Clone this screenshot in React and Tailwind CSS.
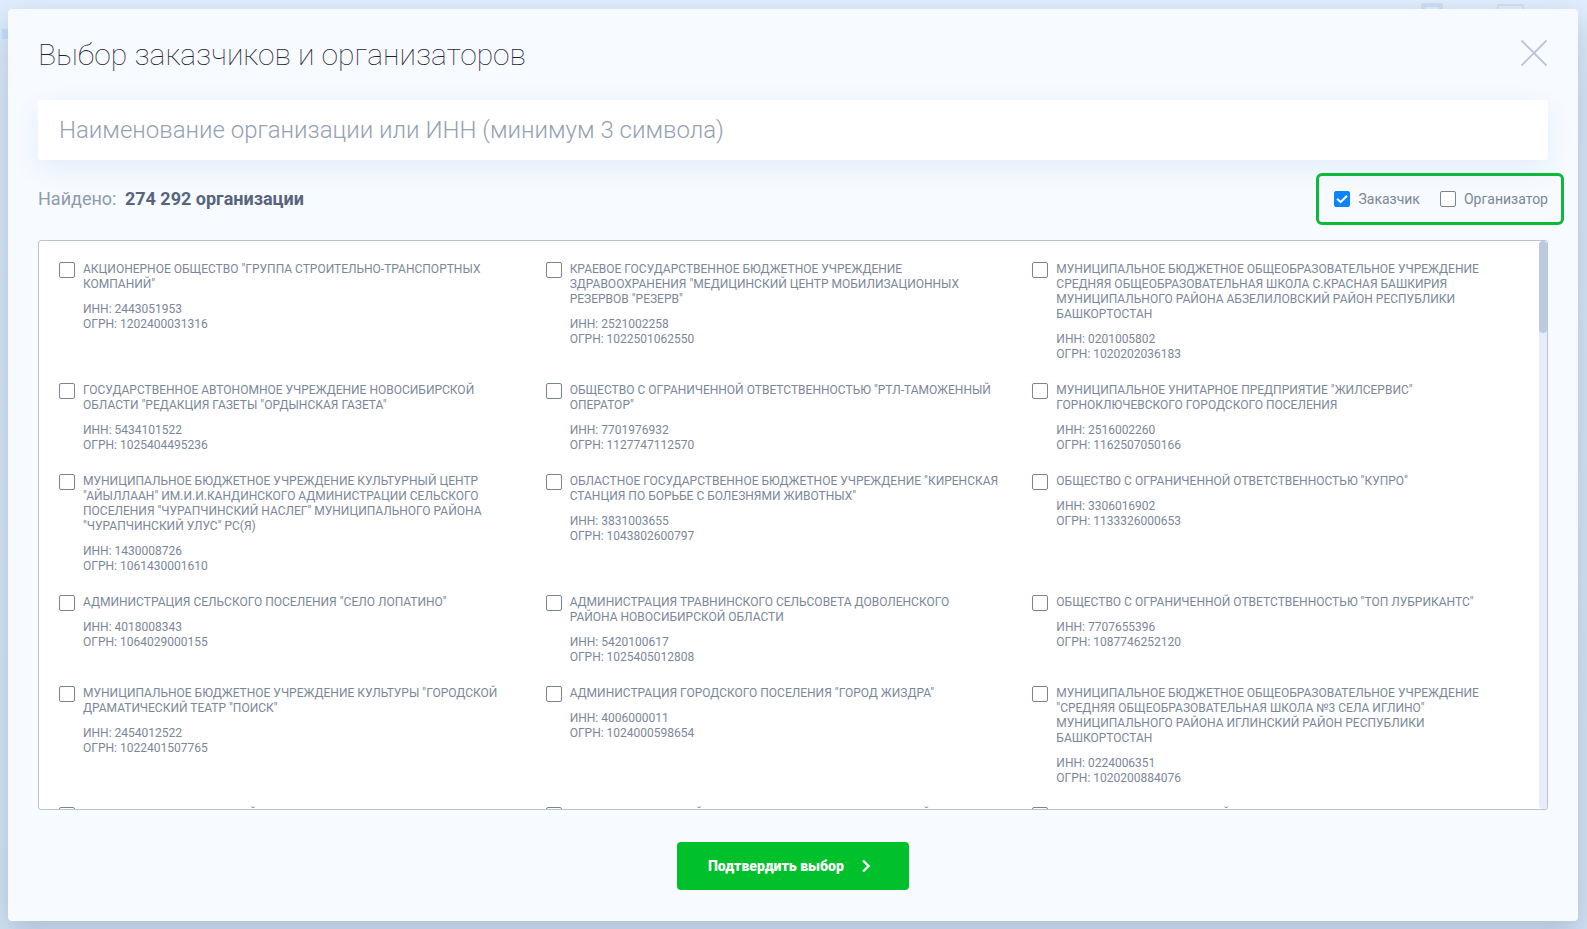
import { useState } from 'react';

const ORGANIZATIONS = [
  { name: 'АКЦИОНЕРНОЕ ОБЩЕСТВО "ГРУППА СТРОИТЕЛЬНО-ТРАНСПОРТНЫХ КОМПАНИЙ"', inn: '2443051953', ogrn: '1202400031316' },
  { name: 'КРАЕВОЕ ГОСУДАРСТВЕННОЕ БЮДЖЕТНОЕ УЧРЕЖДЕНИЕ ЗДРАВООХРАНЕНИЯ "МЕДИЦИНСКИЙ ЦЕНТР МОБИЛИЗАЦИОННЫХ РЕЗЕРВОВ "РЕЗЕРВ"', inn: '2521002258', ogrn: '1022501062550' },
  { name: 'МУНИЦИПАЛЬНОЕ БЮДЖЕТНОЕ ОБЩЕОБРАЗОВАТЕЛЬНОЕ УЧРЕЖДЕНИЕ СРЕДНЯЯ ОБЩЕОБРАЗОВАТЕЛЬНАЯ ШКОЛА С.КРАСНАЯ БАШКИРИЯ МУНИЦИПАЛЬНОГО РАЙОНА АБЗЕЛИЛОВСКИЙ РАЙОН РЕСПУБЛИКИ БАШКОРТОСТАН', inn: '0201005802', ogrn: '1020202036183' },
  { name: 'ГОСУДАРСТВЕННОЕ АВТОНОМНОЕ УЧРЕЖДЕНИЕ НОВОСИБИРСКОЙ ОБЛАСТИ "РЕДАКЦИЯ ГАЗЕТЫ "ОРДЫНСКАЯ ГАЗЕТА"', inn: '5434101522', ogrn: '1025404495236' },
  { name: 'ОБЩЕСТВО С ОГРАНИЧЕННОЙ ОТВЕТСТВЕННОСТЬЮ "РТЛ-ТАМОЖЕННЫЙ ОПЕРАТОР"', inn: '7701976932', ogrn: '1127747112570' },
  { name: 'МУНИЦИПАЛЬНОЕ УНИТАРНОЕ ПРЕДПРИЯТИЕ "ЖИЛСЕРВИС" ГОРНОКЛЮЧЕВСКОГО ГОРОДСКОГО ПОСЕЛЕНИЯ', inn: '2516002260', ogrn: '1162507050166' },
  { name: 'МУНИЦИПАЛЬНОЕ БЮДЖЕТНОЕ УЧРЕЖДЕНИЕ КУЛЬТУРНЫЙ ЦЕНТР "АЙЫЛЛААН" ИМ.И.И.КАНДИНСКОГО АДМИНИСТРАЦИИ СЕЛЬСКОГО ПОСЕЛЕНИЯ "ЧУРАПЧИНСКИЙ НАСЛЕГ" МУНИЦИПАЛЬНОГО РАЙОНА "ЧУРАПЧИНСКИЙ УЛУС" РС(Я)', inn: '1430008726', ogrn: '1061430001610' },
  { name: 'ОБЛАСТНОЕ ГОСУДАРСТВЕННОЕ БЮДЖЕТНОЕ УЧРЕЖДЕНИЕ "КИРЕНСКАЯ СТАНЦИЯ ПО БОРЬБЕ С БОЛЕЗНЯМИ ЖИВОТНЫХ"', inn: '3831003655', ogrn: '1043802600797' },
  { name: 'ОБЩЕСТВО С ОГРАНИЧЕННОЙ ОТВЕТСТВЕННОСТЬЮ "КУПРО"', inn: '3306016902', ogrn: '1133326000653' },
  { name: 'АДМИНИСТРАЦИЯ СЕЛЬСКОГО ПОСЕЛЕНИЯ "СЕЛО ЛОПАТИНО"', inn: '4018008343', ogrn: '1064029000155' },
  { name: 'АДМИНИСТРАЦИЯ ТРАВНИНСКОГО СЕЛЬСОВЕТА ДОВОЛЕНСКОГО РАЙОНА НОВОСИБИРСКОЙ ОБЛАСТИ', inn: '5420100617', ogrn: '1025405012808' },
  { name: 'ОБЩЕСТВО С ОГРАНИЧЕННОЙ ОТВЕТСТВЕННОСТЬЮ "ТОП ЛУБРИКАНТС"', inn: '7707655396', ogrn: '1087746252120' },
  { name: 'МУНИЦИПАЛЬНОЕ БЮДЖЕТНОЕ УЧРЕЖДЕНИЕ КУЛЬТУРЫ "ГОРОДСКОЙ ДРАМАТИЧЕСКИЙ ТЕАТР "ПОИСК"', inn: '2454012522', ogrn: '1022401507765' },
  { name: 'АДМИНИСТРАЦИЯ ГОРОДСКОГО ПОСЕЛЕНИЯ "ГОРОД ЖИЗДРА"', inn: '4006000011', ogrn: '1024000598654' },
  { name: 'МУНИЦИПАЛЬНОЕ БЮДЖЕТНОЕ ОБЩЕОБРАЗОВАТЕЛЬНОЕ УЧРЕЖДЕНИЕ "СРЕДНЯЯ ОБЩЕОБРАЗОВАТЕЛЬНАЯ ШКОЛА №3 СЕЛА ИГЛИНО" МУНИЦИПАЛЬНОГО РАЙОНА ИГЛИНСКИЙ РАЙОН РЕСПУБЛИКИ БАШКОРТОСТАН', inn: '0224006351', ogrn: '1020200884076' },
  { name: 'ОБЩЕСТВО С ОГРАНИЧЕННОЙ ОТВЕТСТВЕННОСТЬЮ', inn: '2460000001', ogrn: '1022400000001' },
  { name: 'АДМИНИСТРАЦИЯ РАЙОНА КОЧЕНЕВСКОГО НОВОСИБИРСКОЙ ОБЛАСТИ', inn: '5425000002', ogrn: '1025400000002' },
  { name: 'ОБЩЕСТВО С ОГРАНИЧЕННОЙ ОТВЕТСТВЕННОСТЬЮ', inn: '7700000003', ogrn: '1087700000003' }
];

function Checkbox({ className = '', ...props }) {
  return (
    <span className={`relative block size-4 shrink-0 ${className}`}>
      <input
        type="checkbox"
        className="peer block size-4 appearance-none rounded-[2px] border border-[#7b8492] bg-white checked:border-[#0a84ff] checked:bg-[#0a84ff]"
        {...props}
      />
      <svg
        viewBox="0 0 16 16"
        className="pointer-events-none absolute inset-0 hidden size-4 peer-checked:block"
        fill="none"
        stroke="white"
        strokeWidth="2"
      >
        <path d="M3.2 7.8 6.6 11.2 13 4.8" />
      </svg>
    </span>
  );
}

function OrganizationItem({ org }) {
  return (
    <label className="flex items-start gap-2 pr-[33px]">
      <Checkbox className="mt-px" />
      <span className="pt-px text-xs leading-[15px] text-[#7b8798]">
        <span className="block">{org.name}</span>
        <span className="mt-2.5 block">ИНН: {org.inn}</span>
        <span className="block">ОГРН: {org.ogrn}</span>
      </span>
    </label>
  );
}

// Page under the dialog, only its edges stay visible
function Backdrop() {
  return (
    <div aria-hidden="true" className="pointer-events-none absolute inset-0 overflow-hidden">
      <div className="absolute top-[29px] left-0.5 h-2.5 w-4 bg-[#c4e0fd]" />
      <div className="absolute top-[3px] right-36 h-5 w-[22px] rounded-[2px] border-4 border-[#cddcf1]" />
      <div className="absolute top-1 right-[63px] h-5 w-[27px] rounded-[2px] border-2 border-[#d0def3]" />
    </div>
  );
}

export default function App() {
  const [query, setQuery] = useState('');
  const [isCustomer, setIsCustomer] = useState(true);
  const [isOrganizer, setIsOrganizer] = useState(false);

  return (
    <div className="relative flex h-screen flex-col overflow-hidden bg-linear-to-b from-[#e0edfd] from-0% via-[#d8e6f9] via-10% to-[#d3e2f5] pt-[9px] pr-[9px] pb-2 pl-2 font-['Roboto',sans-serif]">
      <Backdrop />
      <main className="relative flex min-h-0 flex-1 flex-col rounded bg-[#f7faff] px-[30px] pb-[31px] shadow-[0_12px_30px_rgba(90,115,140,0.32)]">
        <header className="flex h-[91px] shrink-0 items-center justify-between">
          <h1 className="text-[30px] font-thin text-[#1d2433]">Выбор заказчиков и организаторов</h1>
          <button type="button" aria-label="Закрыть" className="mt-[30px] self-start">
            <svg width="28" height="28" viewBox="0 0 28 28" fill="none" stroke="#bcc4da" strokeWidth="1.8">
              <path d="M1.5 1.5 26.5 26.5M26.5 1.5 1.5 26.5" />
            </svg>
          </button>
        </header>

        <input
          type="text"
          aria-label="Наименование организации или ИНН"
          placeholder="Наименование организации или ИНН (минимум 3 символа)"
          value={query}
          onChange={(e) => setQuery(e.target.value)}
          className="h-[60px] shrink-0 rounded-[3px] bg-white px-[21px] text-2xl font-light text-[#5b6b82] shadow-[0_8px_24px_#e0eefb] outline-none placeholder:text-[#95a1b2]"
        />

        <div className="mb-0.5 flex h-[78px] shrink-0 items-center justify-between">
          <p className="text-lg text-[#8e9aad]">
            Найдено: <b className="ml-1 font-bold text-[#56657c]">274 292 организации</b>
          </p>
          <div className="-mr-4 flex h-[52px] items-center gap-5 rounded-md border-3 border-[#0cb93a] pr-[13px] pl-[15px] text-sm text-[#7b8798]">
            <label className="flex items-center gap-2">
              <Checkbox checked={isCustomer} onChange={(e) => setIsCustomer(e.target.checked)} />
              Заказчик
            </label>
            <label className="flex items-center gap-2">
              <Checkbox checked={isOrganizer} onChange={(e) => setIsOrganizer(e.target.checked)} />
              Организатор
            </label>
          </div>
        </div>

        <section className="flex min-h-0 flex-1 overflow-hidden rounded-[3px] border border-[#b9c4d3] bg-white">
          <div className="grid flex-1 grid-cols-3 content-start gap-y-5 overflow-hidden px-5 pt-5">
            {ORGANIZATIONS.map((org) => (
              <OrganizationItem key={org.inn} org={org} />
            ))}
          </div>
          <div className="w-2 shrink-0 rounded bg-[#e6edf7]">
            <div className="h-[92px] rounded bg-[#bccae0]" />
          </div>
        </section>

        <button
          type="button"
          className="mt-8 flex h-12 w-[232px] shrink-0 items-center gap-[17px] self-center rounded bg-[#00c02b] pl-[31px] text-sm font-black text-white"
        >
          Подтвердить выбор
          <svg width="10" height="14" viewBox="0 0 10 14" fill="none" stroke="currentColor" strokeWidth="2.4">
            <path d="M2 1.5 7.5 7 2 12.5" />
          </svg>
        </button>
      </main>
    </div>
  );
}
